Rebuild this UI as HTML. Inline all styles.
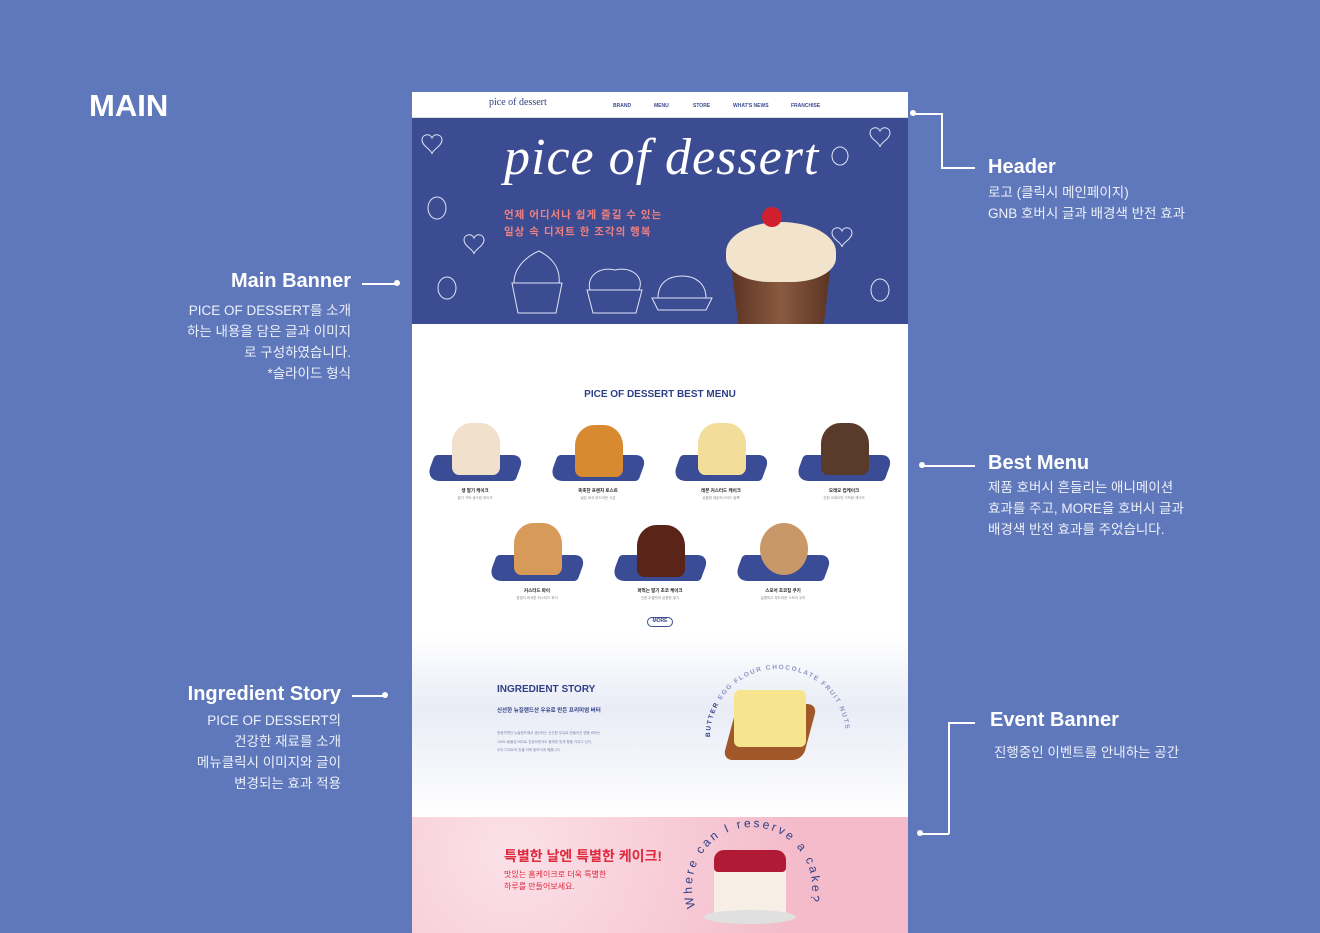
<!DOCTYPE html>
<html><head><meta charset="utf-8">
<style>
*{margin:0;padding:0;box-sizing:border-box}
body{width:1320px;height:933px;background:#5f78bb;position:relative;overflow:hidden;font-family:"Liberation Sans","Noto Sans CJK KR",sans-serif;color:#fff}
.a{position:absolute;white-space:nowrap}
.t{font-weight:bold;font-size:20px}
.d{font-size:13.5px;line-height:21px;color:#eef1fa}
.r{text-align:right}
.ln{position:absolute;background:#fff}
.dot{position:absolute;width:6px;height:6px;border-radius:50%;background:#fff}
#pg{position:absolute;left:412px;top:92px;width:496px;height:841px;background:#fff;overflow:hidden}
.nav{position:absolute;top:11px;font-size:5px;font-weight:bold;color:#3a4a8e}
.item{position:absolute;width:110px;text-align:center;color:#222}
.blob{position:absolute;left:10px;top:40px;width:90px;height:26px;background:#3a4c96;transform:skewX(-20deg);border-radius:3px 12px 3px 14px}
.food{position:absolute;left:32px;top:0;width:48px;height:52px;border-radius:40% 40% 15% 15%}
.nm{position:absolute;top:73px;width:110px;font-size:4.5px;font-weight:bold}
.ds{position:absolute;top:81px;width:110px;font-size:3.5px;color:#888}
</style></head><body>
<div class="a" style="left:89px;top:88px;font-size:31px;font-weight:bold">MAIN</div>

<div class="a t" style="left:988px;top:156px">Header</div>
<div class="a d" style="left:988px;top:182px">로고 (클릭시 메인페이지)<br>GNB 호버시 글과 배경색 반전 효과</div>
<div class="dot" style="left:910px;top:110px"></div>
<div class="ln" style="left:913px;top:113px;width:29px;height:1.5px"></div>
<div class="ln" style="left:941px;top:113px;width:1.5px;height:55px"></div>
<div class="ln" style="left:941px;top:167px;width:34px;height:1.5px"></div>

<div class="a t r" style="right:969px;top:270px">Main Banner</div>
<div class="a d r" style="right:969px;top:300px">PICE OF DESSERT를 소개<br>하는 내용을 담은 글과 이미지<br>로 구성하였습니다.<br>*슬라이드 형식</div>
<div class="ln" style="left:362px;top:283px;width:35px;height:1.5px"></div>
<div class="dot" style="left:394px;top:280px"></div>

<div class="a t" style="left:988px;top:452px">Best Menu</div>
<div class="a d" style="left:988px;top:477px">제품 호버시 흔들리는 애니메이션<br>효과를 주고, MORE을 호버시 글과<br>배경색 반전 효과를 주었습니다.</div>
<div class="dot" style="left:919px;top:462px"></div>
<div class="ln" style="left:922px;top:465px;width:53px;height:1.5px"></div>

<div class="a t r" style="right:979px;top:683px">Ingredient Story</div>
<div class="a d r" style="right:979px;top:710px">PICE OF DESSERT의<br>건강한 재료를 소개<br>메뉴클릭시 이미지와 글이<br>변경되는 효과 적용</div>
<div class="ln" style="left:352px;top:695px;width:33px;height:1.5px"></div>
<div class="dot" style="left:382px;top:692px"></div>

<div class="a t" style="left:990px;top:709px">Event Banner</div>
<div class="a d" style="left:994px;top:742px">진행중인 이벤트를 안내하는 공간</div>
<div class="ln" style="left:948px;top:722px;width:27px;height:1.5px"></div>
<div class="ln" style="left:948px;top:722px;width:1.5px;height:112px"></div>
<div class="ln" style="left:920px;top:833px;width:29px;height:1.5px"></div>
<div class="dot" style="left:917px;top:830px"></div>

<div id="pg">
 <div style="position:absolute;left:0;top:0;width:496px;height:26px;background:#fff;border-bottom:1px solid #ddd"></div>
 <div class="a" style="left:77px;top:5px;font-family:'Liberation Serif',serif;font-size:10px;color:#2f3f86">pice of dessert</div>
 <div class="nav" style="left:201px">BRAND</div>
 <div class="nav" style="left:242px">MENU</div>
 <div class="nav" style="left:281px">STORE</div>
 <div class="nav" style="left:321px">WHAT'S NEWS</div>
 <div class="nav" style="left:379px">FRANCHISE</div>

 <div style="position:absolute;left:0;top:26px;width:496px;height:206px;background:#3c4c92"></div>
 <div class="a" style="left:92px;top:36px;font-family:'Liberation Serif',serif;font-style:italic;font-size:52px;color:#fff;letter-spacing:1px">pice of dessert</div>
 <div class="a" style="left:92px;top:115px;font-size:10.5px;line-height:17px;color:#f08080;font-weight:bold;letter-spacing:1px">언제 어디서나 쉽게 즐길 수 있는<br>일상 속 디저트 한 조각의 행복</div>
 <svg style="position:absolute;left:0;top:26px" width="496" height="206" fill="none" stroke="#dfe4f5" stroke-width="1">
  <path d="M10 22c0-6 8-7 10-2c2-5 10-4 10 2c0 6-10 10-10 14c0-4-10-8-10-14z"/>
  <path d="M458 15c0-6 8-7 10-2c2-5 10-4 10 2c0 6-10 10-10 14c0-4-10-8-10-14z"/>
  <path d="M420 115c0-6 8-7 10-2c2-5 10-4 10 2c0 6-10 10-10 14c0-4-10-8-10-14z"/>
  <path d="M52 122c0-6 8-7 10-2c2-5 10-4 10 2c0 6-10 10-10 14c0-4-10-8-10-14z"/>
  <ellipse cx="25" cy="90" rx="9" ry="11"/><ellipse cx="35" cy="170" rx="9" ry="11"/><ellipse cx="468" cy="172" rx="9" ry="11"/><ellipse cx="428" cy="38" rx="8" ry="9"/>
  <path d="M100 165h50l-6 30h-38z M102 165c0-20 20-30 25-32c10 5 22 15 20 32"/>
  <path d="M175 172h55l-6 23h-43z M178 172c-4-14 10-24 25-20c15-4 30 6 24 20"/>
  <path d="M240 180h60l-6 12h-48z M246 180c0-15 10-22 24-22s24 8 24 22"/>
 </svg>
 <div style="position:absolute;left:318px;top:162px;width:102px;height:70px;background:linear-gradient(90deg,#5a3322,#8a5a40,#5a3322);clip-path:polygon(0 0,100% 0,92% 100%,8% 100%)"></div>
 <div style="position:absolute;left:314px;top:130px;width:110px;height:60px;border-radius:50% 50% 40% 40%;background:#f2e4cc"></div>
 <div style="position:absolute;left:350px;top:115px;width:20px;height:20px;border-radius:50%;background:#d0202e"></div>

 <div class="a" style="left:0;width:496px;top:297px;text-align:center;font-size:10px;font-weight:bold;color:#2f3f86">PICE OF DESSERT BEST MENU</div>
 <div class="item" style="left:8px;top:323px"><div class="blob"></div><div class="food" style="background:#f1e0cc;top:8px"></div><div class="nm">생 딸기 케이크</div><div class="ds">딸기 가득 생크림 케이크</div></div>
 <div class="item" style="left:131px;top:323px"><div class="blob"></div><div class="food" style="background:#d88a30;top:10px"></div><div class="nm">촉촉한 프렌치 토스트</div><div class="ds">겉은 바삭 부드러운 식감</div></div>
 <div class="item" style="left:254px;top:323px"><div class="blob"></div><div class="food" style="background:#f3dd9a;top:8px"></div><div class="nm">레몬 커스터드 케이크</div><div class="ds">상큼한 레몬커스터드 듬뿍</div></div>
 <div class="item" style="left:377px;top:323px"><div class="blob"></div><div class="food" style="background:#5a3a2a;top:8px"></div><div class="nm">오레오 컵케이크</div><div class="ds">진한 오레오맛 가득한 케이크</div></div>
 <div class="item" style="left:70px;top:423px"><div class="blob"></div><div class="food" style="background:#d89a58;top:8px"></div><div class="nm">커스타드 파이</div><div class="ds">겹겹이 바삭한 커스터드 파이</div></div>
 <div class="item" style="left:193px;top:423px"><div class="blob"></div><div class="food" style="background:#5a2418;top:10px"></div><div class="nm">퍼먹는 딸기 초코 케이크</div><div class="ds">진한 초콜릿과 상큼한 딸기</div></div>
 <div class="item" style="left:316px;top:423px"><div class="blob"></div><div class="food" style="background:#c89868;top:8px;border-radius:50%"></div><div class="nm">스모어 초코칩 쿠키</div><div class="ds">달콤하고 부드러운 스모어 쿠키</div></div>
 <div style="position:absolute;left:235px;top:525px;width:26px;height:10px;border:1.3px solid #3a4a8e;border-radius:6px;font-size:5px;font-weight:bold;color:#3a4a8e;text-align:center;line-height:7.5px">MORE</div>

 <div style="position:absolute;left:0;top:545px;width:496px;height:180px;background:linear-gradient(#fff,#e9ecf6 40%,#fff)"></div>
 <div class="a" style="left:85px;top:592px;font-size:10px;font-weight:bold;color:#2f3f86">INGREDIENT STORY</div>
 <div class="a" style="left:85px;top:614px;font-size:5.5px;font-weight:bold;color:#2f3f86">신선한 뉴질랜드산 우유로 만든 프리미엄 버터</div>
 <div class="a" style="left:85px;top:637px;font-size:3.5px;line-height:8.5px;color:#7a84b0">청정지역인 뉴질랜드에서 생산되는 신선한 우유로 만들어진 명품 버터는<br>100% 동물성 버터로 건강하면서도 풍부한 맛과 향을 가지고 있어,<br>우리 디저트의 맛을 더욱 돋보이게 해줍니다.</div>
 <div style="position:absolute;left:318px;top:612px;width:80px;height:56px;background:#a0582a;border-radius:10px;transform:skewX(-15deg)"></div>
 <div style="position:absolute;left:322px;top:598px;width:72px;height:57px;background:#f7e48e;border-radius:6px"></div>
 <svg style="position:absolute;left:0;top:0" width="496" height="841">
  <defs>
   <path id="ar1" d="M298 645 A68 68 0 1 1 434 645"/>
   <path id="ar2" d="M283.4 815 A60 60 0 1 1 396.6 815"/>
  </defs>
  <text font-family="Liberation Sans" font-size="6.5" fill="#8a95c4" font-weight="bold"><textPath href="#ar1" textLength="205" lengthAdjust="spacing"><tspan fill="#2f3f86">BUTTER</tspan> EGG FLOUR CHOCOLATE FRUIT NUTS</textPath></text>
 </svg>

 <div style="position:absolute;left:0;top:725px;width:496px;height:116px;background:radial-gradient(circle at 20% 30%,#fbe1e8,#f4bccb 70%)"></div>
 <div class="a" style="left:92px;top:754px;font-size:14px;font-weight:bold;color:#e0283c">특별한 날엔 특별한 케이크!</div>
 <div class="a" style="left:92px;top:777px;font-size:8px;line-height:12px;color:#e0283c">맛있는 홈케이크로 더욱 특별한<br>하루를 만들어보세요.</div>
 <div style="position:absolute;left:302px;top:766px;width:72px;height:60px;background:#f7efe6;border-radius:6px"></div>
 <div style="position:absolute;left:302px;top:758px;width:72px;height:22px;background:#b01a34;border-radius:10px 10px 4px 4px"></div>
 <div style="position:absolute;left:292px;top:818px;width:92px;height:14px;background:#e0e0e0;border-radius:50%"></div>
 <svg style="position:absolute;left:0;top:0" width="496" height="841">
  <text font-family="Liberation Sans" font-size="12" fill="#2f3f86"><textPath href="#ar2" textLength="222" lengthAdjust="spacing">Where can I reserve a cake?</textPath></text>
 </svg>
</div>
</body></html>
